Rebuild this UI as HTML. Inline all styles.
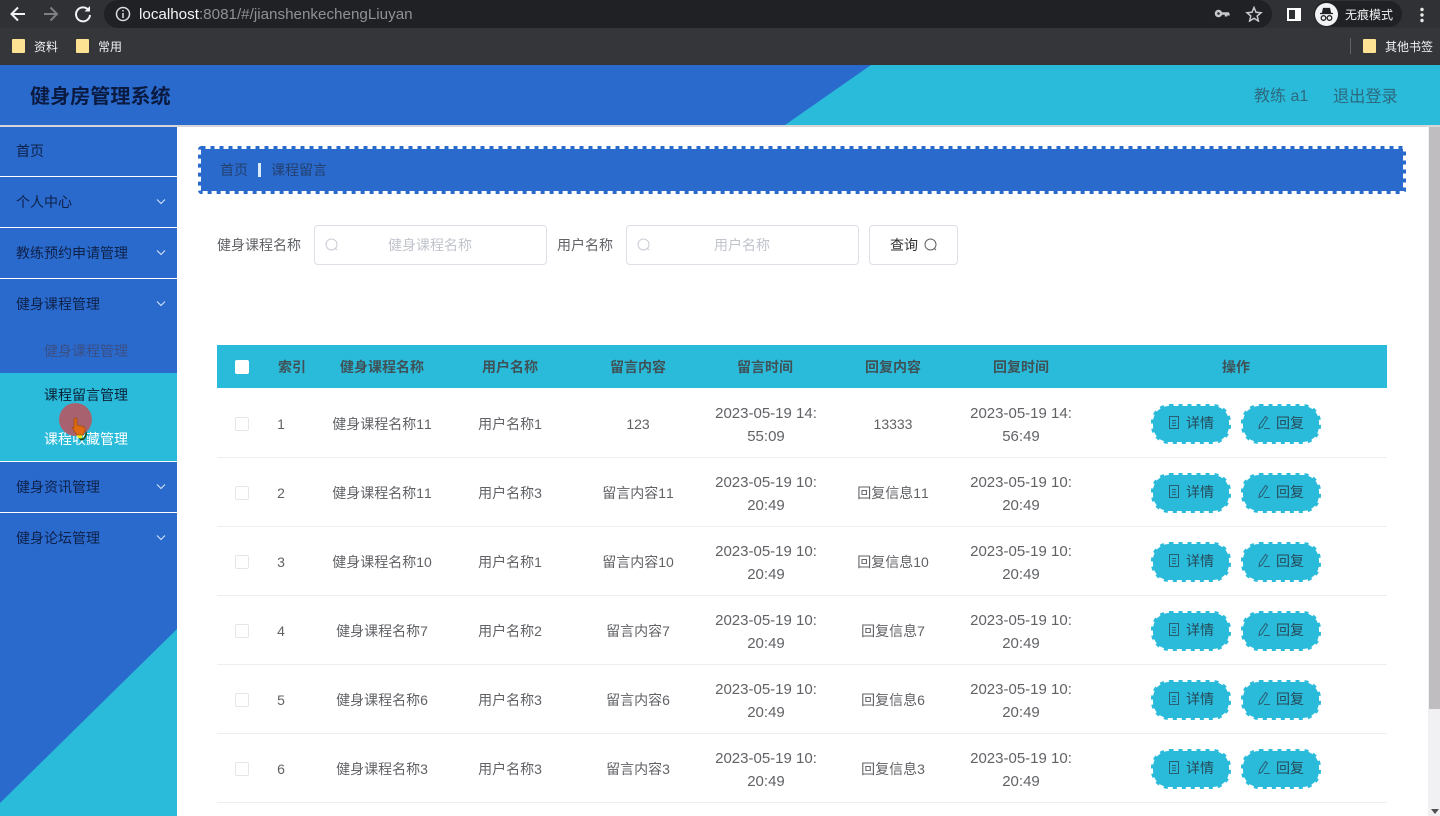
<!DOCTYPE html>
<html lang="zh"><head><meta charset="utf-8"><title>健身房管理系统</title>
<style>
html,body{margin:0;padding:0;width:1440px;height:816px;overflow:hidden;background:#fff}
body{position:relative;font-family:"Liberation Sans","Noto Sans CJK SC",sans-serif;font-size:14px;color:#606266;font-kerning:none}
.a{position:absolute;white-space:nowrap;line-height:20px}
.c{position:absolute;white-space:nowrap;text-align:center;transform:translateX(-50%);line-height:23px}
.s{margin-top:1px}
.t{font-size:15px;margin-top:1px}
.m{position:absolute;left:16px;color:#0e2149;font-size:14px;line-height:20px;white-space:nowrap}
.l{position:absolute;left:0;width:177px;height:1px;background:#fff}
.h{position:absolute;top:357px;font-weight:700;color:#3f5258;font-size:14px;line-height:20px;transform:translateX(-50%);white-space:nowrap}
.hl{position:absolute;left:217px;width:1170px;height:1px;background:#eeeef2}
.ck{position:absolute;left:235px;width:12px;height:12px;border:1px solid #e4e6ea;border-radius:2px;background:#fff}
.btn{position:absolute;width:80px;height:40px;color:#264a5a;font-size:14px;line-height:39px;white-space:nowrap}
.btn svg{position:absolute;left:0;top:0}
.btn span{position:absolute;left:36px;top:0;margin-left:-1px}
.fd{position:absolute;top:39px;width:13px;height:14px;background:#fde293;border-radius:1px}
.bm{font-size:12px;color:#f1f3f4;top:37px}
</style></head><body>

<svg width="0" height="0" style="position:absolute">
<symbol id="bg" viewBox="0 0 80 40"><rect x="2" y="2" width="76" height="36" rx="16" fill="#2abbda"/><rect x="1.500" y="1.500" width="77" height="37" rx="17" fill="none" stroke="#2abbda" stroke-width="3" stroke-dasharray="4 5"/></symbol>
<symbol id="d" viewBox="0 0 80 40"><use href="#bg"/><path d="M18.500 12.500H27.500V24.500H18.500ZM21 16.500H25M21 19H25M21 21.500H25" fill="none" stroke="#2a5f74"/></symbol>
<symbol id="r" viewBox="0 0 80 40"><use href="#bg"/><path d="M24.500 12.500L26.500 14L21 23L18 24.500L18.500 21ZM23 24.500H29" fill="none" stroke="#2a5f74"/></symbol>
</svg>

<!-- browser chrome -->
<div style="position:absolute;left:0;top:0;width:1440px;height:65px;background:#35363a"></div>
<div style="position:absolute;left:0;top:0;width:1440px;height:28px;background:#303134"></div>
<div style="position:absolute;left:104px;top:0;width:1168px;height:28px;background:#202124;border-radius:14px"></div>
<svg style="position:absolute;left:0;top:0" width="110" height="28" fill="none" stroke-width="2">
<path d="M25 14H12M18 7.500L11.500 14L18 20.500" stroke="#f1f3f4"/>
<path d="M57 14H44M50.500 7.500L57 14L50.500 20.500" stroke="#7d7f82"/>
<path d="M88.500 10A7 7 0 1 0 90 15" stroke="#f1f3f4"/><path d="M90 6V11.500H84.500Z" fill="#f1f3f4" stroke="none"/>
</svg>
<svg style="position:absolute;left:115px;top:6px" width="16" height="16" fill="none" stroke="#dadce0" stroke-width="1.500"><circle cx="8" cy="8" r="6.500"/><path d="M8 7V12M8 4V5.500"/></svg>
<div class="a" style="left:139px;top:5px;font-size:15.200px;color:#8e9195"><span style="color:#f1f3f4">localhost</span>:8081/#/jianshenkechengLiuyan</div>
<svg style="position:absolute;left:1214px;top:6px" width="54" height="16" fill="none" stroke="#c6c8cb" stroke-width="1.500">
<circle cx="4.500" cy="7.500" r="2.500" stroke-width="2.500"/><path d="M7 7.500H15M12 7.500V10.500M14.500 7.500V9.500" stroke-width="2.500"/>
<path d="M40 1.500L42 6.300L47 6.700L43.200 10L44.400 15L40 12.300L35.600 15L36.800 10L33 6.700L38 6.300Z"/></svg>
<div style="position:absolute;left:1287px;top:8px;width:6px;height:9px;border:2px solid #fff;border-right-width:6px"></div>
<div style="position:absolute;left:1314px;top:1px;width:88px;height:26px;border-radius:13px;background:#202124"></div>
<div style="position:absolute;left:1315px;top:3px;width:23px;height:23px;border-radius:50%;background:#f1f3f4"></div>
<svg style="position:absolute;left:1315px;top:3px" width="23" height="23" fill="none" stroke="#202124" stroke-width="1.300"><path d="M5 10.500H18M7.500 10L8.500 5.500H14.500L15.500 10Z" fill="#202124"/><circle cx="8.500" cy="15" r="2.300"/><circle cx="14.500" cy="15" r="2.300"/></svg>
<div class="a" style="left:1345px;top:5px;font-size:12px;color:#f1f3f4">无痕模式</div>
<svg style="position:absolute;left:1419px;top:7px" width="6" height="16" fill="#e8e8e8"><circle cx="3" cy="2.500" r="1.700"/><circle cx="3" cy="8" r="1.700"/><circle cx="3" cy="13.500" r="1.700"/></svg>
<div class="fd" style="left:12px"></div>
<div class="a bm" style="left:34px">资料</div>
<div class="fd" style="left:76px"></div>
<div class="a bm" style="left:98px">常用</div>
<div style="position:absolute;left:1350px;top:38px;width:1px;height:16px;background:#5f6368"></div>
<div class="fd" style="left:1363px"></div>
<div class="a bm" style="left:1385px">其他书签</div>

<!-- app header -->
<svg style="position:absolute;left:0;top:65px" width="1440" height="60"><rect width="1440" height="60" fill="#2abbda"/><path d="M0 0H871L785 60H0Z" fill="#2a6acd"/></svg>
<div style="position:absolute;left:0;top:125px;width:1440px;height:2px;background:#d5d6d8"></div>
<div class="a" style="left:30px;top:84px;font-size:20.100px;line-height:26px;font-weight:700;color:#0a1a40">健身房管理系统</div>
<div class="a" style="left:1254px;top:87px;font-size:16px;color:#2c6a80">教练 a1</div>
<div class="a" style="left:1333px;top:87px;font-size:16.200px;color:#2c6a80">退出登录</div>

<!-- sidebar -->
<svg style="position:absolute;left:0;top:127px" width="177" height="689"><rect width="177" height="689" fill="#2a6acd"/><path d="M177 502V689H0V676Z" fill="#2abbda"/></svg>
<div class="l" style="top:176px"></div><div class="l" style="top:227px"></div><div class="l" style="top:278px"></div><div class="l" style="top:461px"></div><div class="l" style="top:512px"></div>
<div class="m" style="top:141px">首页</div>
<div class="m" style="top:192px">个人中心</div>
<div class="m" style="top:243px">教练预约申请管理</div>
<div class="m" style="top:294px">健身课程管理</div>
<div class="m" style="left:44px;top:341px;color:#3a4f86">健身课程管理</div>
<div style="position:absolute;left:0;top:373px;width:177px;height:88px;background:#2abbda"></div>
<div class="m" style="left:44px;top:385px;color:#0b2238">课程留言管理</div>
<div class="m" style="left:44px;top:429px;color:#fff">课程收藏管理</div>
<div class="m" style="top:477px">健身资讯管理</div>
<div class="m" style="top:528px">健身论坛管理</div>
<svg style="position:absolute;left:155px;top:0" width="12" height="560" fill="none" stroke="#d5e2f5" stroke-width="1.100">
<path d="M2 199.500L6 203.500L10 199.500M2 250.500L6 254.500L10 250.500M2 301.500L6 305.500L10 301.500M2 484.500L6 488.500L10 484.500M2 535.500L6 539.500L10 535.500"/></svg>
<div style="position:absolute;left:59px;top:403px;width:33px;height:33px;border-radius:50%;background:#a8626f"></div>
<svg style="position:absolute;left:70px;top:417px" width="20" height="24"><path d="M6 10L12 18C13 21 11 22 9 21C7 20 6 18 6 15Z" fill="#e6ee10"/><path d="M4 2.500C4 0.500 7 0.500 7 2.500V8L13 9.500C15 10 15.500 11 15 13L13.500 18H7L3 12L2 10L4 10.500Z" fill="#e06a10" stroke="#a34a10" stroke-width="0.700"/><path d="M8 20C10 22.500 14 22 15 18L16 14L17 16C17 20 14 24 10.500 23.500Z" fill="#1f4a12"/></svg>

<!-- scrollbar -->
<div style="position:absolute;left:1428px;top:127px;width:12px;height:689px;background:#f1f0f2"></div>
<div style="position:absolute;left:1429px;top:127px;width:11px;height:582px;background:#bfbdbf"></div>
<svg style="position:absolute;left:1431px;top:809px" width="9" height="6"><path d="M0 0H8L4 5Z" fill="#505050"/></svg>

<!-- breadcrumb -->
<svg style="position:absolute;left:198px;top:146px" width="1208" height="48"><rect x="3" y="3" width="1202" height="42" fill="#2a6acd"/><rect x="1.500" y="1.500" width="1205" height="45" rx="2" fill="none" stroke="#2a6acd" stroke-width="3" stroke-dasharray="4 5"/></svg>
<div class="a" style="left:220px;top:160px;color:#23406f">首页</div>
<div style="position:absolute;left:258px;top:163px;width:3px;height:14px;background:#d8eaf8"></div>
<div class="a" style="left:271px;top:160px;color:#23406f">课程留言</div>

<!-- search -->
<div class="a" style="left:217px;top:235px;color:#606266">健身课程名称</div>
<div style="position:absolute;left:314px;top:225px;width:231px;height:38px;border:1px solid #dcdfe6;border-radius:4px"></div>
<svg style="position:absolute;left:325px;top:238px" width="14" height="14" fill="none" stroke="#c8ccd3"><circle cx="6.500" cy="6.500" r="5.500"/><path d="M10.500 10.500L12 12"/></svg>
<div class="c" style="left:430px;top:234px;color:#c0c4cc">健身课程名称</div>
<div class="a" style="left:557px;top:235px;color:#606266">用户名称</div>
<div style="position:absolute;left:626px;top:225px;width:231px;height:38px;border:1px solid #dcdfe6;border-radius:4px"></div>
<svg style="position:absolute;left:637px;top:238px" width="14" height="14" fill="none" stroke="#c8ccd3"><circle cx="6.500" cy="6.500" r="5.500"/><path d="M10.500 10.500L12 12"/></svg>
<div class="c" style="left:742px;top:234px;color:#c0c4cc">用户名称</div>
<div style="position:absolute;left:869px;top:225px;width:87px;height:38px;border:1px solid #dcdfe6;border-radius:4px"></div>
<div class="a" style="left:890px;top:235px;color:#303133">查询</div>
<svg style="position:absolute;left:924px;top:238px" width="14" height="14" fill="none" stroke="#606266"><circle cx="6.500" cy="6.500" r="5.500"/><path d="M10.500 10.500L12 12"/></svg>

<!-- table head -->
<div style="position:absolute;left:217px;top:345px;width:1170px;height:43px;background:#2abbda"></div>
<div style="position:absolute;left:235px;top:360px;width:14px;height:14px;background:#fff;border-radius:2px"></div>
<div class="h" style="left:292px">索引</div><div class="h" style="left:382px">健身课程名称</div><div class="h" style="left:510px">用户名称</div><div class="h" style="left:638px">留言内容</div><div class="h" style="left:765px">留言时间</div><div class="h" style="left:893px">回复内容</div><div class="h" style="left:1021px">回复时间</div><div class="h" style="left:1236px">操作</div>

<!-- rows -->
<div class="hl" style="top:457px"></div><div class="hl" style="top:526px"></div><div class="hl" style="top:595px"></div><div class="hl" style="top:664px"></div><div class="hl" style="top:733px"></div><div class="hl" style="top:802px"></div>

<div class="ck" style="top:417px"></div><div class="c s" style="left:281px;top:412px">1</div><div class="c s" style="left:382px;top:412px">健身课程名称11</div><div class="c s" style="left:510px;top:412px">用户名称1</div><div class="c s" style="left:638px;top:412px">123</div><div class="c t" style="left:766px;top:401px">2023-05-19 14:<br>55:09</div><div class="c s" style="left:893px;top:412px">13333</div><div class="c t" style="left:1021px;top:401px">2023-05-19 14:<br>56:49</div>
<div class="ck" style="top:486px"></div><div class="c s" style="left:281px;top:481px">2</div><div class="c s" style="left:382px;top:481px">健身课程名称11</div><div class="c s" style="left:510px;top:481px">用户名称3</div><div class="c s" style="left:638px;top:481px">留言内容11</div><div class="c t" style="left:766px;top:470px">2023-05-19 10:<br>20:49</div><div class="c s" style="left:893px;top:481px">回复信息11</div><div class="c t" style="left:1021px;top:470px">2023-05-19 10:<br>20:49</div>
<div class="ck" style="top:555px"></div><div class="c s" style="left:281px;top:550px">3</div><div class="c s" style="left:382px;top:550px">健身课程名称10</div><div class="c s" style="left:510px;top:550px">用户名称1</div><div class="c s" style="left:638px;top:550px">留言内容10</div><div class="c t" style="left:766px;top:539px">2023-05-19 10:<br>20:49</div><div class="c s" style="left:893px;top:550px">回复信息10</div><div class="c t" style="left:1021px;top:539px">2023-05-19 10:<br>20:49</div>
<div class="ck" style="top:624px"></div><div class="c s" style="left:281px;top:619px">4</div><div class="c s" style="left:382px;top:619px">健身课程名称7</div><div class="c s" style="left:510px;top:619px">用户名称2</div><div class="c s" style="left:638px;top:619px">留言内容7</div><div class="c t" style="left:766px;top:608px">2023-05-19 10:<br>20:49</div><div class="c s" style="left:893px;top:619px">回复信息7</div><div class="c t" style="left:1021px;top:608px">2023-05-19 10:<br>20:49</div>
<div class="ck" style="top:693px"></div><div class="c s" style="left:281px;top:688px">5</div><div class="c s" style="left:382px;top:688px">健身课程名称6</div><div class="c s" style="left:510px;top:688px">用户名称3</div><div class="c s" style="left:638px;top:688px">留言内容6</div><div class="c t" style="left:766px;top:677px">2023-05-19 10:<br>20:49</div><div class="c s" style="left:893px;top:688px">回复信息6</div><div class="c t" style="left:1021px;top:677px">2023-05-19 10:<br>20:49</div>
<div class="ck" style="top:762px"></div><div class="c s" style="left:281px;top:757px">6</div><div class="c s" style="left:382px;top:757px">健身课程名称3</div><div class="c s" style="left:510px;top:757px">用户名称3</div><div class="c s" style="left:638px;top:757px">留言内容3</div><div class="c t" style="left:766px;top:746px">2023-05-19 10:<br>20:49</div><div class="c s" style="left:893px;top:757px">回复信息3</div><div class="c t" style="left:1021px;top:746px">2023-05-19 10:<br>20:49</div>

<!-- buttons -->
<div class="btn" style="left:1151px;top:404px"><svg width="80" height="40"><use href="#d"/></svg><span>详情</span></div>
<div class="btn" style="left:1241px;top:404px"><svg width="80" height="40"><use href="#r"/></svg><span>回复</span></div>
<div class="btn" style="left:1151px;top:473px"><svg width="80" height="40"><use href="#d"/></svg><span>详情</span></div>
<div class="btn" style="left:1241px;top:473px"><svg width="80" height="40"><use href="#r"/></svg><span>回复</span></div>
<div class="btn" style="left:1151px;top:542px"><svg width="80" height="40"><use href="#d"/></svg><span>详情</span></div>
<div class="btn" style="left:1241px;top:542px"><svg width="80" height="40"><use href="#r"/></svg><span>回复</span></div>
<div class="btn" style="left:1151px;top:611px"><svg width="80" height="40"><use href="#d"/></svg><span>详情</span></div>
<div class="btn" style="left:1241px;top:611px"><svg width="80" height="40"><use href="#r"/></svg><span>回复</span></div>
<div class="btn" style="left:1151px;top:680px"><svg width="80" height="40"><use href="#d"/></svg><span>详情</span></div>
<div class="btn" style="left:1241px;top:680px"><svg width="80" height="40"><use href="#r"/></svg><span>回复</span></div>
<div class="btn" style="left:1151px;top:749px"><svg width="80" height="40"><use href="#d"/></svg><span>详情</span></div>
<div class="btn" style="left:1241px;top:749px"><svg width="80" height="40"><use href="#r"/></svg><span>回复</span></div>
</body></html>
